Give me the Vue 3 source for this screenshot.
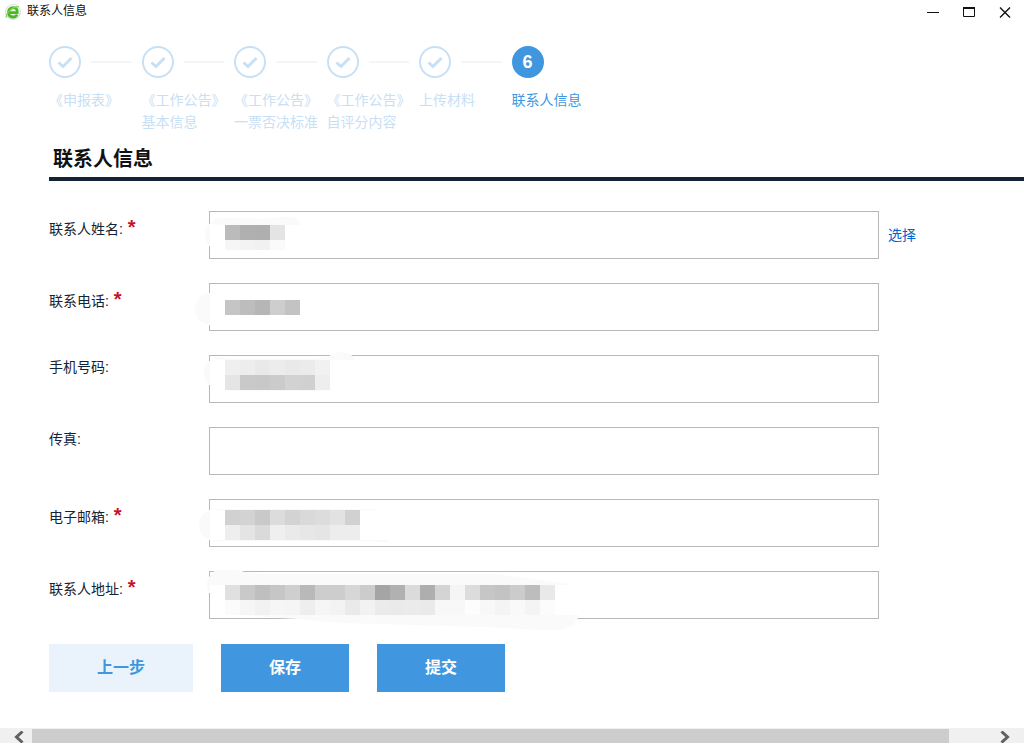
<script setup>
import { ref } from 'vue'

const steps = [
  { lines: ['《申报表》'] },
  { lines: ['《工作公告》', '基本信息'] },
  { lines: ['《工作公告》', '一票否决标准'] },
  { lines: ['《工作公告》', '自评分内容'] },
  { lines: ['上传材料'] },
  { lines: ['联系人信息'], current: true },
]

const fields = ref([
  {
    id: 'name', label: '联系人姓名', required: true, pick: true, value: '',
    mask: {
      blank: ['M0 13h1v22h-1z'],
      brush: ['M1 13C-6 17-6 31 1 35z', 'M1 13C4 8 8 7 20 7L58 8L71 6L84 6Q90 8 92 14H16L1 13z'],
      rows: [
        { y: 14, h: 15, cells: ['bb', 'b0', 'af', 'e4'] },
        { y: 29, h: 10, cells: ['f6', 'f3', 'f1', 'fa'] },
      ],
    },
  },
  {
    id: 'phone', label: '联系电话', required: true, value: '',
    mask: {
      blank: ['M0 10h1v32h-1z'],
      brush: ['M1 10Q-5 10-9 14Q-14 19-14 26Q-14 33-10 37Q-5 42 1 41z'],
      rows: [{ y: 17, h: 15, cells: ['c5', 'bd', 'b6', 'ce', 'c3'] }],
    },
  },
  {
    id: 'mobile', label: '手机号码', value: '',
    mask: {
      blank: ['M0 6h1v24h-1z'],
      brush: [
        'M1 6Q-5 9-5 17Q-5 27 1 30z',
        'M3 4Q11 0 19 4L105 4L120 1Q128-3 134-3Q143-2 146 5H16z',
        'M11 35H121L112 36H25z',
      ],
      rows: [
        { y: 5, h: 15, cells: ['ef', 'ed', 'e9', 'ec', 'e9', 'eb', 'f1'] },
        { y: 20, h: 15, cells: ['e5', 'c9', 'c8', 'cb', 'd2', 'd0', 'ee'] },
      ],
    },
  },
  { id: 'fax', label: '传真', value: '' },
  {
    id: 'email', label: '电子邮箱', required: true, value: '',
    mask: {
      blank: ['M0 11h1v30h-1z'],
      brush: ['M1 11Q-10 15-10 26Q-10 37 1 41z', 'M4 10h166v1h-166z', 'M4 41h177l-3 2h-9l-4-1h-161z'],
      rows: [
        { y: 11, h: 15, cells: ['d1', 'd3', 'c9', 'dc', 'd3', 'd9', 'dc', 'e2', 'd1'] },
        { y: 26, h: 15, cells: ['ee', 'e4', 'da', 'ef', 'ea', 'e7', 'e5', 'ed', 'ed'] },
      ],
    },
  },
  {
    id: 'address', label: '联系人地址', required: true, value: '',
    mask: {
      blank: ['M0 6h1v16h-1z'],
      brush: [
        'M-2 14Q-2 8 1 5Q4-1 10-1H24Q33-1 35 1L56 3L286 3L359 13V14H1V22Q-2 20-2 14z',
        'M16 42L69 47L90 48L135 52L275 56L330 59H348Q366 58 370 44H16z',
      ],
      rows: [
        { y: 14, h: 15, cells: ['e0', 'c9', 'bf', 'c6', 'cf', 'b9', 'cd', 'cd', 'd7', 'cc', 'a5', 'b1', 'db', 'ae', 'd4', 'f5', 'dc', 'c6', 'c3', 'cc', 'bd', 'e9'] },
        { y: 29, h: 15, cells: ['fb', 'f6', 'f2', 'f6', 'f5', 'ee', 'f6', 'f3', 'ea', 'f2', 'eb', 'ea', 'eb', 'ea', 'f8', 'f8', 'fd', 'f8', 'f4', 'f9', 'f4', 'fc'] },
      ],
    },
  },
])

const grey = (level) => `#${level}${level}${level}`
</script>

<template>
  <div class="window">
    <header class="titlebar">
      <svg class="logo" viewBox="0 0 16 16" width="16" height="16" aria-hidden="true">
        <circle cx="8" cy="8" r="7.9" fill="#d3dad8" />
        <circle cx="8" cy="7.6" r="7" fill="#f0f6f0" />
        <path d="M3.5 8.6H12.2C12.6 5.4 10.9 3.6 8.3 3.6C5.2 3.6 3.5 5.8 3.5 8.6C3.5 11.3 5.3 13 8 13C9.9 13 11.3 12.2 12.2 10.8" fill="none" stroke="#4bb821" stroke-width="2.8" />
        <path d="M1.4 13.6C.2 10.2 7.4 2 14 2.6" fill="none" stroke="#7fd650" stroke-width="1.2" />
      </svg>
      <span class="caption">联系人信息</span>
      <div class="controls">
        <button type="button" aria-label="最小化">
          <svg viewBox="0 0 12 12" width="12" height="12"><path d="M0 6.5H12" /></svg>
        </button>
        <button type="button" aria-label="最大化">
          <svg viewBox="0 0 12 12" width="12" height="12"><path d="M.5 1V10.5H11.5V1" /><path d="M0 2H12" stroke-width="2" /></svg>
        </button>
        <button type="button" aria-label="关闭">
          <svg viewBox="0 0 12 12" width="12" height="12"><path d="M1 1.5L11 11.5M11 1.5L1 11.5" stroke-width="1.4" /></svg>
        </button>
      </div>
    </header>

    <main class="content">
      <ol class="steps">
        <li v-for="(step, i) in steps" :key="i" class="step" :class="{ current: step.current }">
          <div class="marker">
            <span class="dot">
              <template v-if="step.current">{{ i + 1 }}</template>
              <svg v-else viewBox="0 0 16 16" width="16" height="16" aria-hidden="true">
                <path d="M1.5 8.5L6 12.5L14.5 4" fill="none" stroke="#c8e0f5" stroke-width="3" />
              </svg>
            </span>
            <span v-if="!step.current" class="link-line"></span>
          </div>
          <div class="step-label">
            <span v-for="line in step.lines" :key="line">{{ line }}</span>
          </div>
        </li>
      </ol>

      <h1>联系人信息</h1>

      <form @submit.prevent>
        <div v-for="field in fields" :key="field.id" class="row">
          <label :for="field.id" :class="{ required: field.required }">{{ field.label }}: <b v-if="field.required">*</b></label>
          <div class="control">
            <input :id="field.id" v-model="field.value" type="text" :required="field.required" />
            <svg v-if="field.mask" class="mask" width="400" height="48" aria-hidden="true">
              <path v-for="d in field.mask.blank" :key="d" :d="d" fill="#fff" />
              <path v-for="d in field.mask.brush" :key="d" :d="d" fill="#fafafa" />
              <g v-for="row in field.mask.rows" :key="row.y">
                <rect v-for="(level, c) in row.cells" :key="c" :x="16 + c * 15" :y="row.y" width="15" :height="row.h" :fill="grey(level)" />
              </g>
            </svg>
          </div>
          <a v-if="field.pick" href="#">选择</a>
        </div>
        <div class="actions">
          <button type="button" class="previous">上一步</button>
          <button type="button">保存</button>
          <button type="submit">提交</button>
        </div>
      </form>
    </main>

    <div class="scrollbar">
      <button type="button" aria-label="向左滚动">
        <svg viewBox="0 0 10 12" width="10" height="12"><path d="M8.5 .5L2.5 6L8.5 11.5" /></svg>
      </button>
      <div class="track"><div class="thumb"></div></div>
      <button type="button" aria-label="向右滚动">
        <svg viewBox="0 0 10 12" width="10" height="12"><path d="M1.5 .5L7.5 6L1.5 11.5" /></svg>
      </button>
    </div>
  </div>
</template>

<style>
body {
  margin: 0;
  background: #fff;
}
</style>

<style scoped>
.window {
  color: #132435;
  font: 14px/22px "Liberation Sans", "Noto Sans CJK SC", sans-serif;
}
button {
  padding: 0;
  border: 0;
  font: inherit;
}
.titlebar {
  display: flex;
  align-items: center;
  height: 24px;
  padding: 0 13px 0 5px;
}
.caption {
  margin-left: 6px;
  padding-bottom: 2px;
  color: #111;
  font-size: 12px;
  line-height: 20px;
}
.controls {
  display: flex;
  gap: 24px;
  margin-left: auto;
}
.controls button {
  display: flex;
  background: none;
}
.controls svg {
  fill: none;
  stroke: #111;
}
.content {
  padding: 22px 0 36px 49px;
}
.steps {
  display: grid;
  grid-template-columns: repeat(6, 1fr);
  max-width: 555px;
  margin: 0;
  padding: 0;
  list-style: none;
  color: #c8e0f5;
}
.marker {
  display: flex;
  align-items: center;
  gap: 10px;
}
.dot {
  display: flex;
  align-items: center;
  justify-content: center;
  box-sizing: border-box;
  width: 32px;
  height: 32px;
  border: 2px solid #c8e0f5;
  border-radius: 50%;
}
.link-line {
  flex: 1;
  height: 2px;
  margin-right: 10px;
  background: #f5f5f5;
}
.step-label {
  display: flex;
  flex-direction: column;
  margin-top: 11px;
  white-space: nowrap;
}
.current {
  color: #4097e0;
}
.current .dot {
  border-color: #4097e0;
  background: #4097e0;
  color: #fff;
  font-size: 18px;
  font-weight: bold;
}
h1 {
  margin: 12px 0 30px;
  padding: 0 4px 4px;
  border-bottom: 4px solid #132435;
  color: #111;
  font-size: 20px;
  line-height: 28px;
}
form {
  display: flex;
  flex-direction: column;
  gap: 24px;
}
.row {
  display: grid;
  grid-template-columns: 160px minmax(0, 1fr) 136px;
  column-gap: 9px;
}
label {
  line-height: 24px;
  margin-right: -9px;
}
label.required {
  line-height: 36px;
}
label b {
  margin-left: 1px;
  color: #c8102e;
  font-size: 20px;
  line-height: 24px;
}
.control {
  position: relative;
  margin-left: -9px;
}
input {
  display: block;
  box-sizing: border-box;
  width: 100%;
  height: 48px;
  padding: 0 15px;
  border: 1px solid #b8b8b8;
  border-radius: 0;
  background: #fff;
  color: inherit;
  font: inherit;
}
.mask {
  position: absolute;
  top: 0;
  left: 0;
  overflow: visible;
  pointer-events: none;
}
a {
  align-self: center;
  color: #0066cc;
  text-decoration: none;
}
.actions {
  display: flex;
  gap: 28px;
  margin-top: 1px;
}
.actions button {
  width: 128px;
  height: 48px;
  background: #4097e0;
  color: #fff;
  font-size: 16px;
  font-weight: bold;
}
.actions .previous {
  width: 144px;
  background: #eaf3fb;
  color: #4097e0;
}
.scrollbar {
  display: flex;
  height: 15px;
  background: #f0f0f0;
}
.scrollbar button {
  display: flex;
  align-items: center;
  justify-content: flex-end;
  width: 32px;
  padding: 2px 8px 0 0;
  background: none;
}
.scrollbar button:last-child {
  padding-right: 14px;
}
.scrollbar svg {
  fill: none;
  stroke: #606060;
  stroke-width: 3;
}
.track {
  flex: 1;
  padding: 1px 43px 0 0;
}
.thumb {
  height: 14px;
  background: #cdcdcd;
}
</style>
